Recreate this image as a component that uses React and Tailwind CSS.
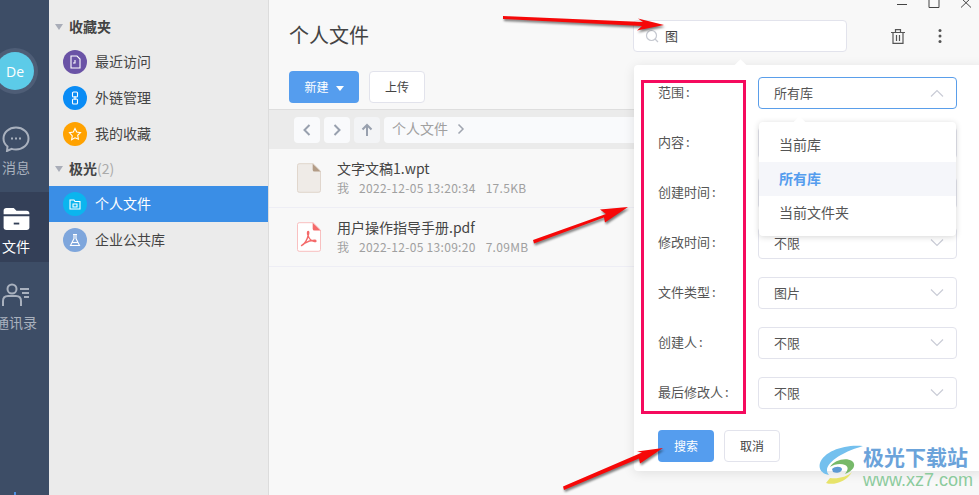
const font = { fontFamily: '"Noto Sans CJK SC", "Liberation Sans", sans-serif' };

const Chevron = ({ up }) => (
  <svg width="14" height="8" viewBox="0 0 14 8" fill="none" stroke="#c9ccd6" strokeWidth="1.2">
    <path d={up ? 'M1 7.5 7 1.5l6 6' : 'M1 .5l6 6 6-6'} />
  </svg>
);

const Circle = ({ bg, children }) => (
  <div className={`flex h-6 w-6 shrink-0 items-center justify-center rounded-full ${bg}`}>
    <svg width="14" height="14" viewBox="0 0 14 14" fill="none" stroke="#fff" strokeWidth="1.1">
      {children}
    </svg>
  </div>
);

const SideItem = ({ bg, label, active, icon }) => (
  <div className={`flex h-9 items-center gap-[8px] pl-[14px] text-[14px] ${active ? 'bg-[#3a8ee6] text-white' : 'text-[#444]'}`}>
    <Circle bg={bg}>{icon}</Circle>
    <span className="mb-[2px]">{label}</span>
  </div>
);

const SideHead = ({ label, count }) => (
  <div className="flex h-[34px] items-center pl-[6px] text-[14px] font-bold text-[#444]">
    <span className="mr-[6px] h-0 w-0 border-x-[4px] border-t-[6px] border-x-transparent border-t-[#a9adb8]" />
    <span className="mb-[2px]">{label}</span>
    {count && <span className="mb-[2px] font-normal text-[#aaa]">{count}</span>}
  </div>
);

const FileIcon = ({ pdf }) => (
  <svg width="24" height="30" viewBox="0 0 26 32">
    <path d="M2.5.5h15l8 8v21a2 2 0 0 1-2 2h-21a2 2 0 0 1-2-2v-27a2 2 0 0 1 2-2z" fill={pdf ? '#fff' : '#efebe7'} stroke={pdf ? '#f7b9b9' : '#ddd3c8'} />
    <path d="M17 .5l8.5 8.5H19a2 2 0 0 1-2-2z" fill={pdf ? '#f46a6a' : '#b39c86'} />
    {pdf && (
      <path d="M5 25c3-1 6-6 7.500-12 .5-2 .2-3-.5-3s-1 2 0 4.500c1 3 4 6 7 6.500 2 .3 2-1.500 0-1.500-3 0-8 1.500-11 3.500-2 1.500-3.500 3-3 2z" fill="none" stroke="#f46a6a" strokeWidth="1.500" />
    )}
  </svg>
);

const FileRow = ({ pdf, name, date, size }) => (
  <div className="flex h-[59px] items-center border-b border-[#eeeef5] pl-[28px]">
    <FileIcon pdf={pdf} />
    <div className="mb-[2px] ml-[16px]">
      <div className="text-[14px] leading-[20px] text-[#444]">{name}</div>
      <div className="mt-[1px] text-[12px] leading-[17px] text-[#a0a0a0]">
        我<span className="ml-[10px] tracking-[0.3px]">{date}</span><span className="ml-[10px] tracking-[0.3px]">{size}</span>
      </div>
    </div>
  </div>
);

const NavButton = ({ d, bg }) => (
  <div className={`flex h-[26px] w-[26px] items-center justify-center rounded-[4px] ${bg}`}>
    <svg width="14" height="14" viewBox="0 0 14 14" fill="none" stroke="#98a0ae" strokeWidth="2">
      <path d={d} />
    </svg>
  </div>
);

const FilterRow = ({ label, value, open }) => (
  <div className="flex h-[31px] items-center">
    <div className="mb-[2px] w-[100px] text-[13px] text-[#555]">{label}<span className="ml-[2px]">:</span></div>
    <div className={`flex h-[32px] w-[199px] items-center justify-between rounded-[4px] border bg-white pl-[15px] pr-[12px] text-[13px] text-[#555] ${open ? 'border-[#5a9eea]' : 'border-[#e2e3ec]'}`}>
      <span>{value}</span>
      <Chevron up={open} />
    </div>
  </div>
);

const Rail = () => (
  <div className="flex h-full w-[49px] shrink-0 flex-col overflow-hidden bg-[#3d4d66] text-[14px] text-[#a9b1be]">
    <div className="ml-[-8px] mt-[48px] flex h-[46px] w-[46px] items-center justify-center rounded-full bg-[#4e5d76]">
      <div className="flex h-[38px] w-[38px] items-center justify-center rounded-full bg-[#5ccbe8] text-[14px] text-white" style={{ fontFamily: '"Open Sans", sans-serif' }}>De</div>
    </div>
    <div className="mt-[32px] flex w-[32px] flex-col items-center">
      <svg width="28" height="26" viewBox="0 0 28 26" fill="none" stroke="#a9b1be" strokeWidth="2">
        <path d="M14 1.500c7 0 12.500 4.800 12.500 11S21 23.500 14 23.500c-1.500 0-3-.2-4.300-.6L5 25l.5-4.500C3 18.500 1.500 15.700 1.500 12.500 1.500 6.300 7 1.500 14 1.500z" />
        <path d="M9 12.500h2M13 12.500h2M17 12.500h2" />
      </svg>
      <div className="mt-[5px] whitespace-nowrap leading-[20px]">消息</div>
    </div>
    <div className="mt-[15px] flex h-[70px] w-[49px] flex-col bg-[#344058] text-white">
      <div className="flex w-[32px] flex-col items-center pt-[15px]">
        <svg width="27" height="23" viewBox="0 0 28 25">
          <path d="M3 1h8l3 3h11a3 3 0 0 1 3 3v1H0V4a3 3 0 0 1 3-3z" fill="#fff" />
          <path d="M0 10h28v12a3 3 0 0 1-3 3H3a3 3 0 0 1-3-3z" fill="#fff" />
          <rect x="11" y="17" width="6" height="2" fill="#344058" />
        </svg>
        <div className="mt-[6px] whitespace-nowrap leading-[20px]">文件</div>
      </div>
    </div>
    <div className="mt-[21px] flex w-[32px] flex-col items-center">
      <svg width="28" height="24" viewBox="0 0 28 24" fill="none" stroke="#a9b1be" strokeWidth="2">
        <circle cx="10" cy="6" r="4.500" />
        <path d="M1 23v-5c0-3 2-5 5-5h8c3 0 5 2 5 5v5" />
        <path d="M18 6h9M20 10h7M22 14h5" />
      </svg>
      <div className="mt-[5px] whitespace-nowrap leading-[20px]">通讯录</div>
    </div>
    <div className="ml-[14px] mt-auto h-[3px] w-[2px] bg-[#4e8fe0]" />
  </div>
);

const Sidebar = () => (
  <div className="h-full w-[220px] shrink-0 border-r border-[#dcdcdc] bg-[#ebebeb] pt-[10px]">
    <SideHead label="收藏夹" />
    <SideItem bg="bg-[#6a53a6]" label="最近访问" icon={<><path d="M3 1h6l3 3v9H3z" /><path d="M7 5v3H5" /></>} />
    <SideItem bg="bg-[#0a8cf5]" label="外链管理" icon={<><rect x="4.500" y="1" width="5" height="5" rx="1" /><rect x="4.500" y="8" width="5" height="5" rx="1" /><path d="M7 5v4" /></>} />
    <SideItem bg="bg-[#ffa200]" label="我的收藏" icon={<path d="M7 1.500l1.700 3.600 3.800.5-2.800 2.700.7 3.900L7 10.800l-3.400 1.900.7-3.900L1.500 5.600l3.800-.5z" />} />
    <SideHead label="极光" count="(2)" />
    <SideItem active bg="bg-[#0bb5ee]" label="个人文件" icon={<><path d="M2 12V3h4l1 1.500h5V12z" /><path d="M5 7h4v3H5z" /></>} />
    <SideItem bg="bg-[#7ea6dc]" label="企业公共库" icon={<><path d="M5 1.500h4M6 1.500v4L2.500 12.500h9L8 5.500v-4" /><path d="M4 9.500h6" /></>} />
  </div>
);

const Popover = () => (
  <div className="absolute left-[365px] top-[65px] h-[406px] w-[350px] rounded-[4px] bg-white pl-[24px] pt-[12px] shadow-[0_2px_12px_rgba(0,0,0,0.1)]">
    <div className="absolute left-[102px] top-[-4px] h-[9px] w-[9px] rotate-45 bg-white" />
    <div className="flex flex-col gap-[19px]">
      <div className="relative">
        <FilterRow label="范围" value="所有库" open />
        <div className="absolute left-[101px] top-[45px] z-10 w-[197px] rounded-[4px] bg-white py-[6px] text-[14px] text-[#555] shadow-[0_1px_6px_rgba(0,0,0,0.16)]">
          <div className="absolute left-[36px] top-[-4px] h-[9px] w-[9px] rotate-45 bg-white" />
          <div className="flex h-[34px] items-center pb-[2px] pl-[20px]">当前库</div>
          <div className="flex h-[34px] items-center bg-[#f5f6fa] pb-[2px] pl-[20px] font-bold text-[#559dee]">所有库</div>
          <div className="flex h-[34px] items-center pb-[2px] pl-[20px]">当前文件夹</div>
        </div>
      </div>
      <FilterRow label="内容" value="" />
      <FilterRow label="创建时间" value="" />
      <FilterRow label="修改时间" value="不限" />
      <FilterRow label="文件类型" value="图片" />
      <FilterRow label="创建人" value="不限" />
      <FilterRow label="最后修改人" value="不限" />
    </div>
    <div className="mt-[22px] flex gap-[10px] text-[12px]">
      <div className="flex h-[32px] w-[56px] items-center justify-center rounded-[4px] bg-[#559dee] text-white">搜索</div>
      <div className="flex h-[32px] w-[56px] items-center justify-center rounded-[4px] border border-[#e2e3ec] bg-white text-[#444]">取消</div>
    </div>
  </div>
);

const Main = () => (
  <div className="relative flex h-full min-w-0 flex-1 flex-col bg-[#f8f8f8]">
    <div className="flex h-[8px] items-end justify-end overflow-hidden">
      <svg width="82" height="9" viewBox="0 0 82 9" fill="none" stroke="#444" strokeWidth="1" className="shrink-0">
        <path d="M0 5.500h10M32 -5v13.500h10V-5M64 -1l10 9.500M74 -1L64 8.500" />
      </svg>
    </div>
    <div className="flex h-[56px] shrink-0 items-center pl-[20px]">
      <div className="mb-[2px] w-[344px] text-[20px] text-[#444]">个人文件</div>
      <div className="flex h-[32px] w-[214px] items-center rounded-[4px] border border-[#e2e3ec] bg-white pl-[11px] text-[13px] text-[#444]">
        <svg width="14" height="14" viewBox="0 0 14 14" fill="none" stroke="#c5c8d0" strokeWidth="1.200">
          <circle cx="6.500" cy="6.500" r="5" /><path d="M10 10l3 3" />
        </svg>
        <span className="ml-[6px]">图</span>
      </div>
      <svg width="14" height="15" viewBox="0 0 14 15" fill="none" stroke="#555" strokeWidth="1.200" className="ml-[44px]">
        <path d="M0 3.500h14M4.500 3V.6h5V3M2 3.500V14.400h10V3.500M5.500 6v6M8.500 6v6" />
      </svg>
      <svg width="4" height="14" viewBox="0 0 4 14" fill="#555" className="ml-[33px]">
        <circle cx="2" cy="1.500" r="1.500" /><circle cx="2" cy="7" r="1.500" /><circle cx="2" cy="12.500" r="1.500" />
      </svg>
    </div>
    <div className="mt-[7px] flex shrink-0 gap-[10px] pl-[20px] text-[12px]">
      <div className="flex h-[32px] w-[70px] items-center justify-center gap-[7px] rounded-[4px] bg-[#559dee] text-white">
        新建<span className="mt-[2px] h-0 w-0 border-x-[4px] border-t-[5px] border-x-transparent border-t-white" />
      </div>
      <div className="flex h-[32px] w-[56px] items-center justify-center rounded-[4px] border border-[#e2e3ec] bg-white text-[#444]">上传</div>
    </div>
    <div className="mt-[6px] flex h-[40px] shrink-0 items-center gap-[4px] border-t border-[#dedede] bg-[#ebebeb] pl-[25px]">
      <NavButton bg="bg-[#f9fafc]" d="M9.500 2L4.500 7l5 5" />
      <NavButton bg="bg-[#f9fafc]" d="M4.500 2l5 5-5 5" />
      <NavButton bg="bg-[#f3f4f6]" d="M7 13V2M2.500 6.500L7 2l4.500 4.500" />
      <div className="flex h-[26px] flex-1 items-center rounded-[4px] bg-[#f9fafc] pb-[2px] pl-[8px] text-[14px] text-[#a0a0a0]">
        个人文件
        <svg width="8" height="12" viewBox="0 0 8 12" fill="none" stroke="#a0a5b0" strokeWidth="1.500" className="ml-[9px]">
          <path d="M1.500 1.500L6 6l-4.500 4.500" />
        </svg>
      </div>
    </div>
    <FileRow name="文字文稿1.wpt" date="2022-12-05 13:20:34" size="17.5KB" />
    <FileRow pdf name="用户操作指导手册.pdf" date="2022-12-05 13:09:20" size="7.09MB" />
    <Popover />
  </div>
);

const Arrow = ({ d }) => <path d={d} fill="#f60808" />;

const Annotations = () => (
  <>
    <div className="pointer-events-none absolute left-[641px] top-[80px] z-20 h-[334px] w-[105px] border-[3px] border-[#f50a5e]" />
    <svg width="979" height="495" viewBox="0 0 979 495" className="pointer-events-none absolute left-0 top-0 z-20 drop-shadow-[1px_2px_1px_rgba(0,0,0,0.5)]">
      <Arrow d="M503 16l140 6-5-3.500 26 6.500-27 5.500 5-4.500L503 19z" />
      <Arrow d="M533 240l73-26-6-4.500 28-2.500-23 15.500-1-5-70 26z" />
      <Arrow d="M563 486.500l79-34-5-1 26-3.500-23 15.500-1-5-75 31.500z" />
    </svg>
  </>
);

const Watermark = () => (
  <div className="pointer-events-none absolute left-[819px] top-[445px] z-20 flex items-start">
    <svg width="45" height="40" viewBox="0 0 45 40" fill="none">
      <path d="M44 1C26-1 5 6 1 18c-2 7 3 11 9 12C3 23 14 10 44 1z" fill="#74c0ee" />
      <path d="M11 22c4-7 16-10 22-6 5 4 1 10-7 13 3-4 4-7 0-9-4-2-11-1-15 2z" fill="#77b96a" />
      <path d="M13 24c3-3 9-3 10 0 0 3-5 5-9 3z" fill="#5d9ad3" />
      <path d="M7 38c8 3 21-2 26-11-5 5-14 7-22 6z" fill="#e7e36a" />
    </svg>
    <div className="ml-[-1px] mt-[-2px] whitespace-nowrap">
      <div className="text-[21px] font-bold leading-[26px] text-[#6ba3da]">极光下载站</div>
      <div className="text-[18px] leading-[22px] text-[#8ccb9d]" style={{ fontFamily: '"Liberation Sans", sans-serif' }}>www.xz7.com</div>
    </div>
  </div>
);

export default function App() {
  return (
    <div className="relative flex h-[495px] w-[979px] overflow-hidden" style={font}>
      <Rail />
      <Sidebar />
      <Main />
      <Annotations />
      <Watermark />
    </div>
  );
}
